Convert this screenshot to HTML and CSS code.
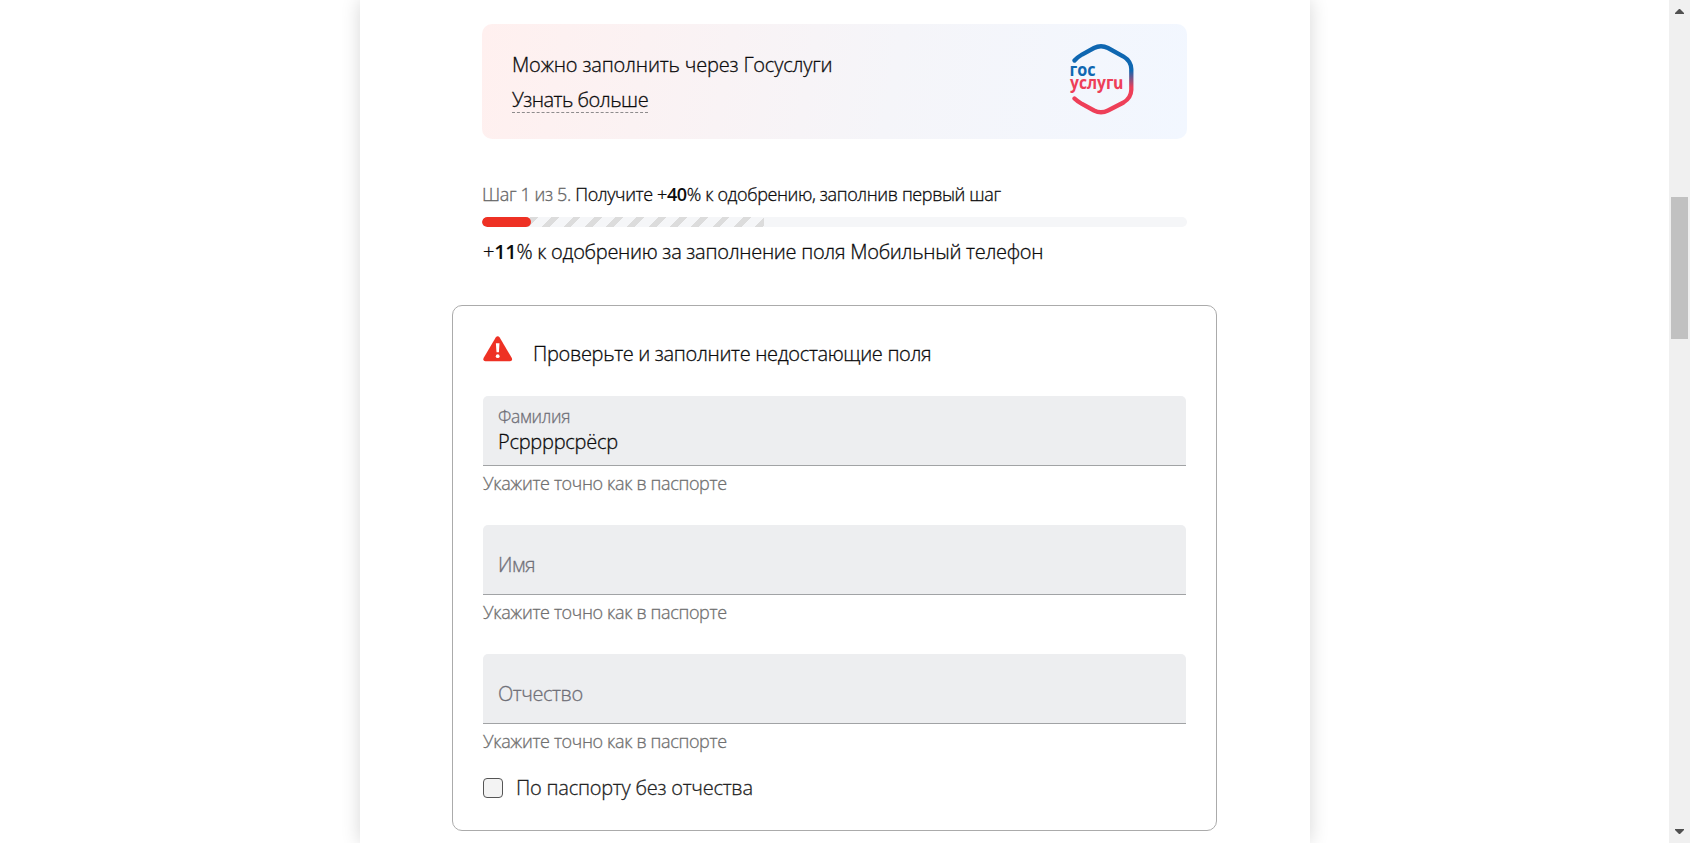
FILE: index.html
```
<!DOCTYPE html>
<html lang="ru">
<head>
<meta charset="utf-8">
<title>Анкета</title>
<link rel="stylesheet" href="styles.css">
</head>
<body>
<div class="viewport">
  <main class="sheet">
    <section class="banner">
      <div class="banner-text">
        <div><span class="t-banner">Можно заполнить через Госуслуги</span></div>
        <a class="more">Узнать больше</a>
      </div>
      <svg class="logo" width="68" height="74" viewBox="0 0 68 74">
        <defs>
          <linearGradient id="hex" gradientUnits="userSpaceOnUse" x1="0" y1="2" x2="0" y2="72">
            <stop offset="0.38" stop-color="#0f67b1"/><stop offset="0.62" stop-color="#ee3f58"/>
          </linearGradient>
        </defs>
        <path d="M6.500 18.500Q9 15.500 14 12.500L26 6Q33 2.500 40 6L55.500 14.500Q63 19 63.300 27V48Q63 56 55.500 60.500L40 68.500Q33 72 26 68.500L14 62Q9 59 6.500 56.500" fill="none" stroke="url(#hex)" stroke-width="4.300" stroke-linecap="round"/>
        <text class="logo-top" x="1.500" y="33.500" textLength="26" lengthAdjust="spacingAndGlyphs">гос</text>
        <text class="logo-bottom" x="2" y="47" textLength="43.500" lengthAdjust="spacingAndGlyphs">услуг</text>
        <text class="logo-bottom slant" transform="translate(46 47) skewX(12)" textLength="10.500" lengthAdjust="spacingAndGlyphs">и</text>
      </svg>
    </section>

    <section class="progress">
      <div class="step"><span class="t-step"><span class="muted">Шаг 1 из 5.</span> Получите +<b>40</b>% к одобрению, заполнив первый шаг</span></div>
      <div class="track"><div class="potential"></div><div class="done"></div></div>
      <div class="hint"><span class="t-hint">+<b>11</b>% к одобрению за заполнение поля Мобильный телефон</span></div>
    </section>

    <section class="card">
      <div class="notice">
        <svg width="30" height="26" viewBox="0 0 30 26">
          <path d="M12.700 1.500Q14.700-1 16.700 1.500L28.800 22Q29.800 25 27 25.200H2.400Q-.4 25 .6 22Z" fill="#ee3124"/>
          <path d="M12.900 7.200h3.600l-.6 9h-2.400z" fill="#fff"/><circle cx="14.700" cy="20.200" r="1.900" fill="#fff"/>
        </svg>
        <span class="t-notice">Проверьте и заполните недостающие поля</span>
      </div>
      <div class="field filled"><span class="label">Фамилия</span><span class="value">Рсррррсрёср</span></div>
      <div class="help"><span class="t-help">Укажите точно как в паспорте</span></div>
      <div class="field"><span class="empty">Имя</span></div>
      <div class="help"><span class="t-help">Укажите точно как в паспорте</span></div>
      <div class="field"><span class="empty">Отчество</span></div>
      <div class="help last"><span class="t-help">Укажите точно как в паспорте</span></div>
      <div class="check"><span class="box"></span><span class="t-check">По паспорту без отчества</span></div>
    </section>
  </main>
</div>
<aside class="scrollbar">
  <svg class="arrow" width="9" height="5" viewBox="0 0 9 5"><path d="M0 5V4L4 0H5L9 4V5Z" fill="#505050"/></svg>
  <div class="thumb"></div>
  <svg class="arrow" width="9" height="5" viewBox="0 0 9 5"><path d="M0 0V1L4 5H5L9 1V0Z" fill="#505050"/></svg>
</aside>
</body>
</html>
```
FILE: styles.css
```
* { box-sizing: border-box; }
body {
  margin: 0;
  height: 843px;
  display: flex;
  overflow: hidden;
  background: #fff;
  color: #0b0b0c;
  font: 300 20px/28px "Open Sans", "Noto Sans", sans-serif;
  -webkit-text-stroke: .3px currentColor;
}
b { font-weight: 600; -webkit-text-stroke: 0; }
.viewport { flex: 1; height: 843px; overflow: hidden; }
.sheet {
  width: 950px;
  height: 843px;
  margin-left: 360px;
  padding: 24px 93px 0 92px;
  background: #fff;
  box-shadow: 0 0 18px rgba(0, 0, 0, .16);
}
.banner {
  width: 705px;
  height: 115px;
  margin-left: 30px;
  padding: 0 51px 0 30px;
  display: flex;
  justify-content: space-between;
  align-items: flex-start;
  border-radius: 10px;
  background: linear-gradient(100deg, #fff0ef 0%, #f5f5f9 58%, #f2f7ff 100%);
}
.banner-text { padding-top: 27px; white-space: nowrap; }
.t-banner { letter-spacing: -.17px; }
.more { display: inline-block; height: 27px; margin-top: 7px; letter-spacing: -.5px; border-bottom: 1px dashed #8d8b8c; }
.logo { margin-top: 18px; -webkit-text-stroke: 0; }
.logo-top, .logo-bottom { font: 700 18px "Open Sans", sans-serif; }
.logo-top { fill: #0f67b1; }
.logo-bottom { fill: #ee3f58; }
.slant { font-style: italic; }
.progress { margin: 41px 0 0 30px; width: 705px; white-space: nowrap; }
.step { font-size: 18px; letter-spacing: -.38px; }
.muted { color: #666; }
.track {
  height: 10px;
  margin-top: 9px;
  display: grid;
  border-radius: 5px;
  background: #f5f6f8;
  overflow: hidden;
}
.potential, .done { grid-area: 1 / 1; height: 10px; }
.potential {
  width: 282px;
  background: repeating-linear-gradient(135deg, #f5f6f8 0 4.200px, #dcdcdc 4.200px 9.800px, #f5f6f8 9.800px 15.050px);
}
.done { width: 49px; border-radius: 5px; background: #ee3124; }
.hint { margin-top: 11px; padding-left: 1px; letter-spacing: -.28px; }
.card {
  width: 765px;
  height: 526px;
  margin-top: 39px;
  padding: 30px 30px 0;
  border: 1px solid #ababab;
  border-radius: 10px;
}
.notice { height: 60px; display: flex; gap: 20px; white-space: nowrap; letter-spacing: -.33px; }
.notice .t-notice { padding-top: 4px; }
.field {
  height: 70px;
  padding: 7px 15px 0;
  display: flex;
  flex-direction: column;
  align-items: flex-start;
  border-bottom: 1px solid #a1a3a5;
  border-radius: 5px 5px 0 0;
  background: #edeef0;
}
.label { font-size: 17.500px; line-height: 26px; letter-spacing: -.3px; color: #707078; }
.value { line-height: 26px; letter-spacing: -.25px; }
.empty { margin-top: 19px; letter-spacing: -.45px; color: #707078; }
.help { height: 59px; padding-top: 3px; font-size: 18px; letter-spacing: -.35px; color: #707070; }
.help.last { height: 50px; }
.check { display: flex; align-items: center; gap: 13px; letter-spacing: -.24px; color: #222; }
.box { width: 20px; height: 20px; border: 1px solid #555; border-radius: 4px; background: #f3f3f3; }
.scrollbar {
  width: 21px;
  height: 843px;
  padding: 9px 0;
  display: flex;
  flex-direction: column;
  align-items: center;
  background: #f0f0f0;
}
.thumb { width: 17px; height: 142px; margin: 183px 0 auto; background: #c1c1c1; }
```
